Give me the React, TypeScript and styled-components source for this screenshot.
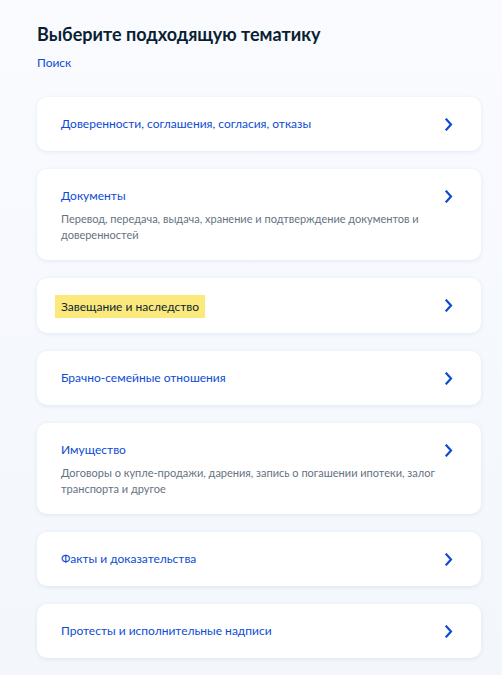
import * as React from "react";
import styled, {createGlobalStyle} from "styled-components";

interface Topic {
    title: string
    description?: string
    marked?: boolean
}

const topics: Topic[] = [
    {title: "Доверенности, соглашения, согласия, отказы"},
    {
        title: "Документы",
        description: "Перевод, передача, выдача, хранение и подтверждение документов и доверенностей"
    },
    {title: "Завещание и наследство", marked: true},
    {title: "Брачно-семейные отношения"},
    {
        title: "Имущество",
        description: "Договоры о купле-продажи, дарения, запись о погашении ипотеки, залог транспорта и другое"
    },
    {title: "Факты и доказательства"},
    {title: "Протесты и исполнительные надписи"},
];

export default class App extends React.Component {
    render() {
        return <Page>
            <GlobalStyle/>
            <Heading>Выберите подходящую тематику</Heading>
            <SearchLink href="#">Поиск</SearchLink>
            <TopicList>
                {topics.map(topic => <TopicCard key={topic.title}>
                    <TopicText>
                        <TopicTitle marked={topic.marked || false}>{topic.title}</TopicTitle>
                        {topic.description && <TopicDescription>{topic.description}</TopicDescription>}
                    </TopicText>
                    <Chevron width="8" height="13" viewBox="0 0 8 13">
                        <path d="M1.5 1.5 L6 6.5 L1.5 11.5" fill="none" stroke="#0d4cd3" strokeWidth="2.2"
                              strokeLinecap="square"/>
                    </Chevron>
                </TopicCard>)}
            </TopicList>
        </Page>
    }
}

const GlobalStyle = createGlobalStyle`
    html, body {
        margin: 0;
        background: #f7f9fd;
    }
    body {
        font-family: Lato, "Noto Sans", sans-serif;
    }
`

const Page = styled.div`
    min-height: 675px;
    box-sizing: border-box;
    padding: 22px 21px 19px 37px;
    background: linear-gradient(180deg, #f9fbff 0%, #f3f6fb 100%);
`

const Heading = styled.h1`
    margin: 0;
    font-size: 18px;
    line-height: 24px;
    font-weight: 700;
    color: #0b1f33;
`

const SearchLink = styled.a`
    display: inline-block;
    margin-top: 9px;
    font-size: 12px;
    line-height: 16px;
    color: #0d4cd3;
    text-decoration: none;
`

const TopicList = styled.div`
    display: flex;
    flex-direction: column;
    gap: 18px;
    margin-top: 26px;
`

const TopicCard = styled.div`
    display: flex;
    align-items: flex-start;
    justify-content: space-between;
    padding: 17px 28px 17px 24px;
    background: #ffffff;
    border-radius: 10px;
    box-shadow: 0 1px 4px rgba(34, 77, 160, 0.10);
`

const TopicText = styled.div`
    flex: 1;
    padding-right: 6px;
`

const TopicTitle = styled.div<{marked: boolean}>`
    font-size: 12px;
    line-height: 20px;
    color: ${props => props.marked ? "#0b1f33" : "#0d4cd3"};
    ${props => props.marked ? `
        display: inline-block;
        background: #fbe97c;
        margin: -2px -6px;
        padding: 2px 6px 1px;
    ` : ""}
`

const TopicDescription = styled.div`
    margin-top: 5px;
    font-size: 11px;
    line-height: 16px;
    color: #66727f;
`

const Chevron = styled.svg`
    flex: none;
    margin-top: 4px;
`
